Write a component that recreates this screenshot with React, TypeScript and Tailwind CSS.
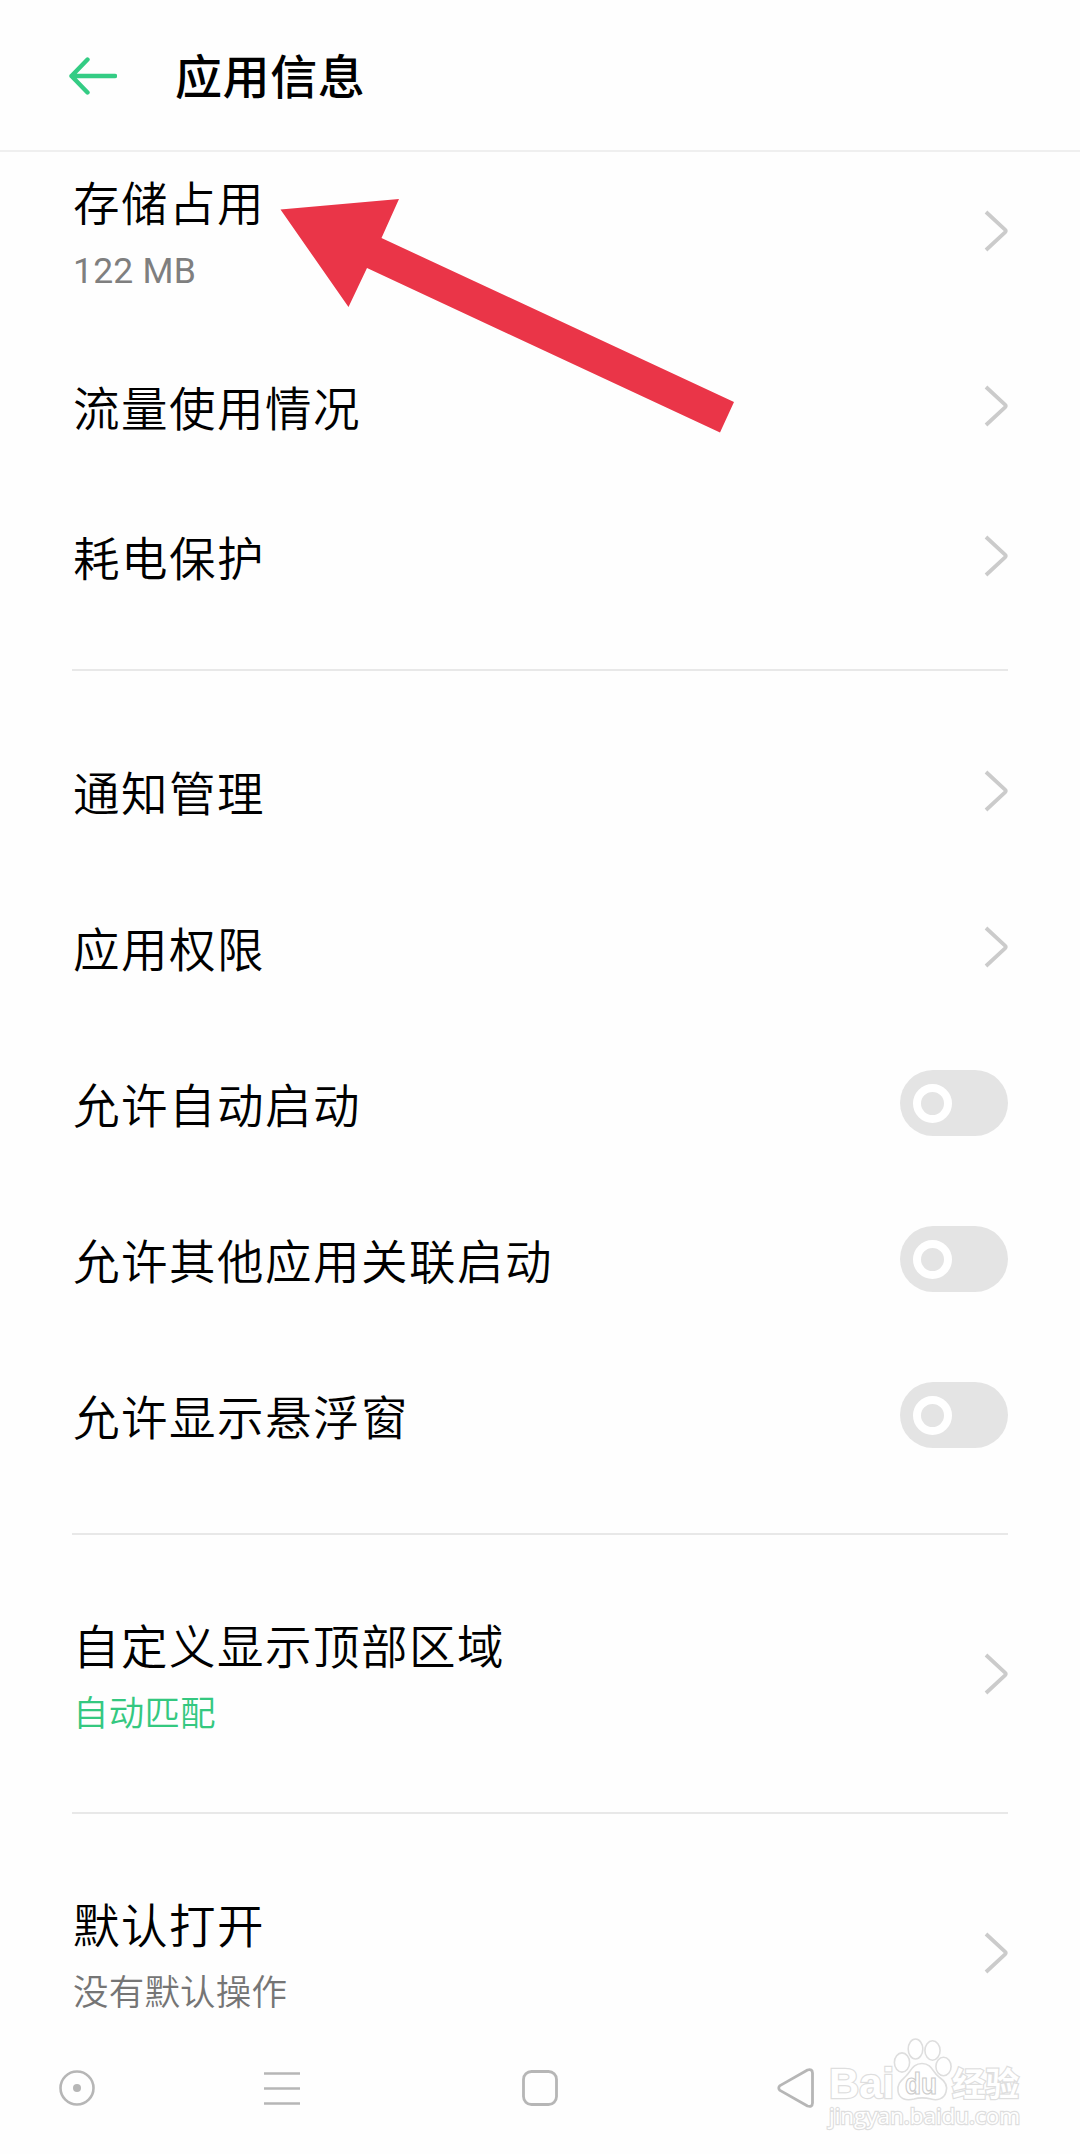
import React from 'react';

interface SettingItem {
  title: string;
  sub?: string;
  subClass?: string;
  type: 'link' | 'switch';
  height: string;
}

const usageItems: SettingItem[] = [
  { title: '存储占用', sub: '122 MB', subClass: 'font-normal text-[#7f7f7f]', type: 'link', height: 'h-[157px]' },
  { title: '流量使用情况', type: 'link', height: 'h-[150px] mt-[22px]' },
  { title: '耗电保护', type: 'link', height: 'h-[150px]' },
];

const permissionItems: SettingItem[] = [
  { title: '通知管理', type: 'link', height: 'h-[156px]' },
  { title: '应用权限', type: 'link', height: 'h-[156px]' },
  { title: '允许自动启动', type: 'switch', height: 'h-[156px]' },
  { title: '允许其他应用关联启动', type: 'switch', height: 'h-[156px]' },
  { title: '允许显示悬浮窗', type: 'switch', height: 'h-[156px]' },
];

const Chevron: React.FC = () => (
  <svg className="h-[42px] w-6 shrink-0" viewBox="0 0 24 42" fill="none" stroke="#cbcbcb" strokeWidth="3.8" strokeLinejoin="round">
    <path d="M2 2 L21 19.6 Q22.4 21 21 22.4 L2 40" />
  </svg>
);

const Switch: React.FC = () => (
  <button className="flex h-[66px] w-[108px] shrink-0 items-center rounded-full bg-[#e4e4e4] pl-[13px]">
    <span className="h-[39px] w-[39px] rounded-full border-8 border-white" />
  </button>
);

const Row: React.FC<{ item: SettingItem }> = ({ item }) => (
  <div className={`flex items-center justify-between ${item.height}`}>
    <div className={`flex flex-col pl-px ${item.sub ? 'pt-[14px]' : 'pt-[7px]'}`}>
      <span className="text-[46.5px] leading-[66px] font-[350] tracking-[1.5px]">{item.title}</span>
      {item.sub && <span className={`text-[35.5px] leading-[66px] tracking-[0.2px] ${item.subClass}`}>{item.sub}</span>}
    </div>
    {item.type === 'link' ? <Chevron /> : <Switch />}
  </div>
);

const Divider: React.FC = () => <div className="h-0.5 bg-[#e8e8e8]" />;

const Watermark: React.FC = () => (
  <svg className="absolute bottom-5 left-[820px] h-[104px] w-[210px]" viewBox="820 2030 210 104" fill="#ffffff" stroke="#dedede" strokeWidth="1.6">
    <text x="829" y="2098" fontSize="42" fontWeight="700" textLength="65" lengthAdjust="spacingAndGlyphs" fontFamily="'Liberation Sans', sans-serif" strokeWidth="2.5" paintOrder="stroke">Bai</text>
    <ellipse cx="902" cy="2062.5" rx="7.6" ry="9.6" />
    <ellipse cx="915.5" cy="2049" rx="7.3" ry="10" />
    <ellipse cx="932.5" cy="2050.5" rx="7.6" ry="9.7" />
    <ellipse cx="943.5" cy="2066.5" rx="7.6" ry="9.3" />
    <path d="M922 2063.5 C932 2063.5 933 2073 939 2077 C945 2081 948 2086 946 2092 C944 2099 937 2101 931 2099 C925 2097.5 919 2097.5 914 2099 C906 2101 899 2099 898 2091 C897 2083 902 2080 906 2076 C911 2071 913 2063.5 922 2063.5 Z" />
    <text x="905" y="2094" fontSize="29" fontWeight="700" textLength="32" lengthAdjust="spacingAndGlyphs" fontFamily="'Liberation Sans', sans-serif" strokeWidth="1.2" stroke="#cccccc">du</text>
    <text x="952" y="2096" fontSize="33" fontWeight="700" textLength="67" lengthAdjust="spacingAndGlyphs" fontFamily="'Noto Sans CJK SC', sans-serif" strokeWidth="2.5" paintOrder="stroke">经验</text>
    <text x="829" y="2124" fontSize="22" textLength="191" lengthAdjust="spacingAndGlyphs" fontFamily="'Open Sans', sans-serif" strokeWidth="2.4" paintOrder="stroke">jingyan.baidu.com</text>
  </svg>
);

const NavBar: React.FC = () => (
  <div className="flex h-[132px] shrink-0 items-center pl-[59px]">
    <svg className="h-9 w-9" viewBox="0 0 36 36" fill="none" stroke="#b6b6b6" strokeWidth="2.6">
      <circle cx="18" cy="18" r="16.5" />
      <circle cx="18" cy="18" r="4" fill="#b6b6b6" stroke="none" />
    </svg>
    <svg className="ml-[169px] h-9 w-9" viewBox="0 0 36 36" stroke="#b6b6b6" strokeWidth="2.6">
      <path d="M0 3.5 H36 M0 18.5 H36 M0 33.5 H36" />
    </svg>
    <svg className="ml-[222px] h-9 w-9" viewBox="0 0 36 36" fill="none" stroke="#b6b6b6" strokeWidth="2.8">
      <rect x="1.5" y="1.5" width="33" height="33" rx="8" />
    </svg>
    <svg className="ml-[219px] h-10 w-[37px]" viewBox="0 0 37 40" fill="none" stroke="#b6b6b6" strokeWidth="2.8" strokeLinejoin="round">
      <path d="M3 17.6 L30.5 2 Q35.3 0.5 35.5 5 V35 Q35.3 39.5 30.5 38 L3 22.4 Q0.5 20 3 17.6 Z" />
    </svg>
  </div>
);

const App: React.FC = () => {
  return (
    <div className="relative flex h-[2154px] w-[1080px] flex-col overflow-hidden bg-[#fefefe] font-['Roboto','Noto_Sans_CJK_SC',sans-serif] text-black">
      {/* Header */}
      <header className="flex h-[152px] shrink-0 items-center border-b-2 border-[#efefef] pl-[69px]">
        <svg className="mt-px h-[38px] w-[48px]" viewBox="0 0 48 38" fill="none" stroke="#34cc84" strokeWidth="4.4" strokeLinecap="round" strokeLinejoin="round">
          <path d="M46 19 H2.5 M18.5 2.5 L2.5 19 L18.5 35.5" />
        </svg>
        <h1 className="ml-[58px] pt-1.5 text-[47px] leading-[66px] font-medium tracking-[0.6px]">应用信息</h1>
      </header>

      <main className="shrink-0 px-[72px]">
        <section>
          {usageItems.map(item => <Row key={item.title} item={item} />)}
        </section>

        <div className="pt-[38px] pb-[42px]"><Divider /></div>

        <section>
          {permissionItems.map(item => <Row key={item.title} item={item} />)}
        </section>

        <div className="pt-10"><Divider /></div>

        <Row item={{ title: '自定义显示顶部区域', sub: '自动匹配', subClass: 'font-[350] text-[#34c880]', type: 'link', height: 'h-[277px]' }} />
        <Divider />
        <Row item={{ title: '默认打开', sub: '没有默认操作', subClass: 'font-[350] text-[#757575]', type: 'link', height: 'h-[208px] pt-[69px]' }} />
      </main>

      <NavBar />

      {/* Pointer to the storage entry */}
      <svg className="absolute top-[190px] left-[270px] h-[250px] w-[480px]" viewBox="270 190 480 250" fill="#ea3548">
        <path d="M280.5 209.5 L399 199 L381.5 238 L734 402 L720 432.5 L367 268 L348.5 307 Z" />
      </svg>
      <Watermark />
    </div>
  );
};

export default App;
